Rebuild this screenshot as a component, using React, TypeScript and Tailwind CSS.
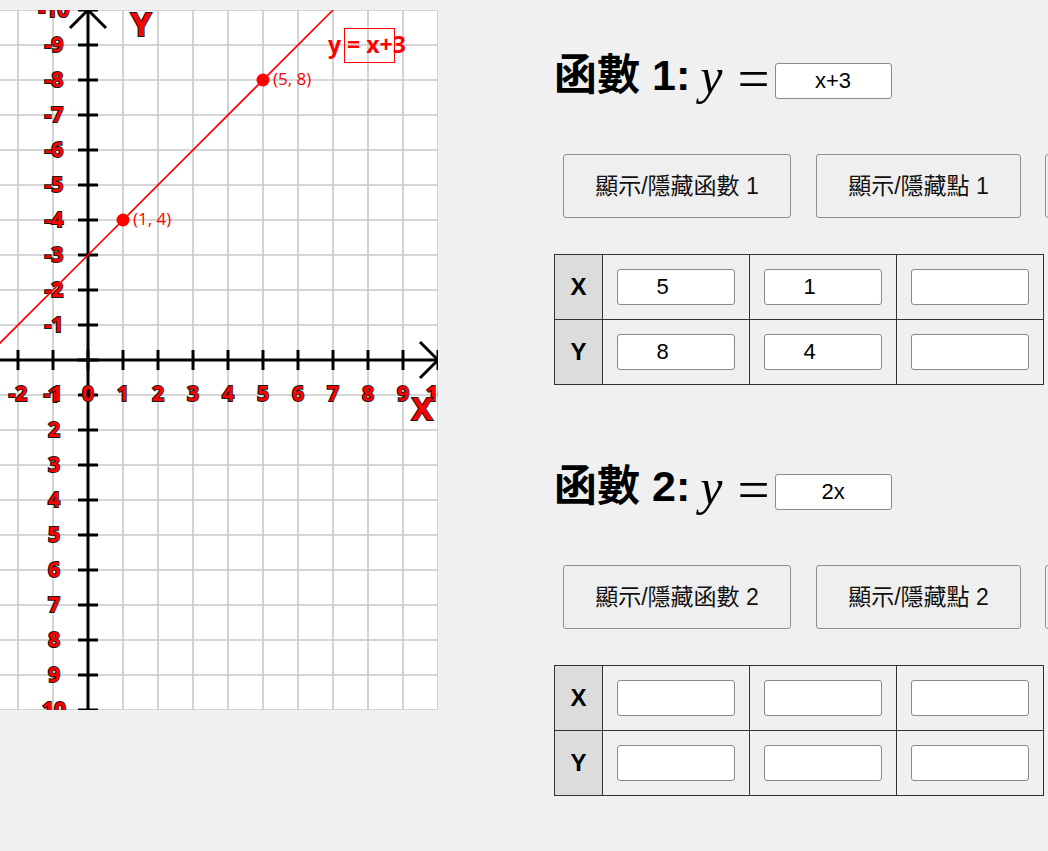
import React from "react";

const UI = '"Liberation Sans", "Noto Sans CJK TC", sans-serif';
const GF = '"Open Sans", "Noto Sans", sans-serif';

function Graph() {
  const ox = 88;
  const oy = 350;
  const s = 35;
  const xs: number[] = [];
  for (let j = -3; j <= 10; j++) xs.push(j);
  const ys: number[] = [];
  for (let k = -10; k <= 10; k++) ys.push(k);
  const lab = {
    fill: "#ff0000",
    stroke: "#1a1a1a",
    strokeWidth: 2,
    paintOrder: "stroke" as const,
    fontWeight: 700,
    fontFamily: GF,
  };
  return (
    <svg width={438} height={700} viewBox="0 0 438 700" className="mt-[10px] shrink-0 block bg-white">
      {xs.map((j) => (
        <line key={"vx" + j} x1={ox + s * j} y1={0} x2={ox + s * j} y2={700} stroke="#c8c8c8" strokeWidth={1.6} />
      ))}
      {ys.map((k) => (
        <line key={"hy" + k} x1={0} y1={oy + s * k} x2={438} y2={oy + s * k} stroke="#c8c8c8" strokeWidth={1.6} />
      ))}
      <line x1={ox} y1={0} x2={ox} y2={700} stroke="#000" strokeWidth={3} />
      <line x1={0} y1={oy} x2={438} y2={oy} stroke="#000" strokeWidth={3} />
      {ys.map((k) => (
        <line key={"ty" + k} x1={ox - 10} y1={oy + s * k} x2={ox + 10} y2={oy + s * k} stroke="#000" strokeWidth={3} />
      ))}
      {xs.map((j) => (
        <line key={"tx" + j} x1={ox + s * j} y1={oy - 10} x2={ox + s * j} y2={oy + 10} stroke="#000" strokeWidth={3} />
      ))}
      <polyline points={`${ox - 18},18 ${ox},0 ${ox + 18},18`} fill="none" stroke="#000" strokeWidth={3} />
      <polyline points={`420,${oy - 18} 438,${oy} 420,${oy + 18}`} fill="none" stroke="#000" strokeWidth={3} />
      {ys
        .filter((k) => k !== 0)
        .map((k) => (
          <text key={"ly" + k} x={54} y={oy + s * k + 7} fontSize={21} textAnchor="middle" {...lab}>
            {k}
          </text>
        ))}
      {xs
        .filter((j) => j >= -2)
        .map((j) => (
          <text key={"lx" + j} x={ox + s * j} y={391} fontSize={21} textAnchor="middle" {...lab}>
            {j}
          </text>
        ))}
      <text x={141} y={26} fontSize={33} textAnchor="middle" {...lab}>
        Y
      </text>
      <text x={422} y={410} fontSize={31} textAnchor="middle" {...lab}>
        X
      </text>
      <line x1={-20} y1={353} x2={353} y2={-20} stroke="#ff0000" strokeWidth={1.6} />
      <circle cx={263} cy={70} r={6.5} fill="#ff0000" />
      <circle cx={123} cy={210} r={6.5} fill="#ff0000" />
      <text x={273} y={75} fontSize={17} fill="#ff0000" fontFamily={GF}>
        (5, 8)
      </text>
      <text x={133} y={215} fontSize={17} fill="#ff0000" fontFamily={GF}>
        (1, 4)
      </text>
      <text x={328} y={43} fontSize={23} fill="#ff0000" fontWeight={700} fontFamily={GF}>
        y = x+3
      </text>
      <rect x={344.5} y={18.5} width={50} height={34} fill="none" stroke="#ff0000" strokeWidth={1} />
    </svg>
  );
}

function Field({ value, num }: { value: string; num?: boolean }) {
  return (
    <input
      readOnly
      value={value}
      className={
        "w-[118px] h-[36px] bg-white border border-[#8a8a8a] rounded-[3px] text-center text-[22px] text-black outline-none " +
        (num ? "pl-[2px] pr-[29px]" : "px-[2px]")
      }
      style={{ fontFamily: UI }}
    />
  );
}

function Btn({ label, w }: { label: string; w: string }) {
  return (
    <button
      className={"h-[64px] shrink-0 border border-[#8f8f8f] rounded-[3px] bg-[#efefef] text-[23px] text-[#111] whitespace-nowrap " + w}
      style={{ fontFamily: UI }}
    >
      {label}
    </button>
  );
}

function Section({ n, expr, xs, ys }: { n: number; expr: string; xs: string[]; ys: string[] }) {
  return (
    <div className="flex flex-col">
      <div className="flex items-center h-[36px]">
        <span className="text-[43px] font-bold leading-none text-black mb-[12px] whitespace-nowrap" style={{ fontFamily: UI }}>
          函數 {n}:
        </span>
        <span
          className="ml-[10px] text-[50px] italic leading-none text-black mb-[10px]"
          style={{ fontFamily: '"Liberation Serif", serif' }}
        >
          y
        </span>
        <span
          className="ml-[15px] text-[57px] leading-none text-black mb-[6px]"
          style={{ fontFamily: '"Liberation Serif", serif' }}
        >
          =
        </span>
        <div className="ml-[5px]">
          <input
            readOnly
            value={expr}
            className="w-[117px] h-[36px] bg-white border border-[#8a8a8a] rounded-[3px] text-center text-[22px] text-black outline-none px-[2px]"
            style={{ fontFamily: UI }}
          />
        </div>
      </div>
      <div className="flex gap-[25px] ml-[9px] mt-[55px]">
        <Btn label={`顯示/隱藏函數 ${n}`} w="w-[228px]" />
        <Btn label={`顯示/隱藏點 ${n}`} w="w-[205px]" />
        <Btn label={`顯示/隱藏表格 ${n}`} w="w-[228px] -ml-px" />
      </div>
      <div className="mt-[36px] w-[490px] grid grid-cols-[47px_146px_146px_146px] grid-rows-[64px_64px] gap-px bg-[#333] border border-[#333]">
        <div className="bg-[#dcdcdc] flex items-center justify-center text-[24px] font-bold text-black" style={{ fontFamily: UI }}>
          X
        </div>
        {xs.map((v, i) => (
          <div key={"x" + i} className="bg-[#f0f0f0] flex items-center justify-center">
            <Field value={v} num />
          </div>
        ))}
        <div className="bg-[#dcdcdc] flex items-center justify-center text-[24px] font-bold text-black" style={{ fontFamily: UI }}>
          Y
        </div>
        {ys.map((v, i) => (
          <div key={"y" + i} className="bg-[#f0f0f0] flex items-center justify-center">
            <Field value={v} num />
          </div>
        ))}
      </div>
    </div>
  );
}

export default function App() {
  return (
    <div className="w-[1048px] h-[851px] overflow-hidden bg-[#f0f0f0] flex items-start">
      <Graph />
      <div className="ml-[116px] pt-[63px] flex flex-col gap-[89px] shrink-0">
        <Section n={1} expr="x+3" xs={["5", "1", ""]} ys={["8", "4", ""]} />
        <Section n={2} expr="2x" xs={["", "", ""]} ys={["", "", ""]} />
      </div>
    </div>
  );
}
